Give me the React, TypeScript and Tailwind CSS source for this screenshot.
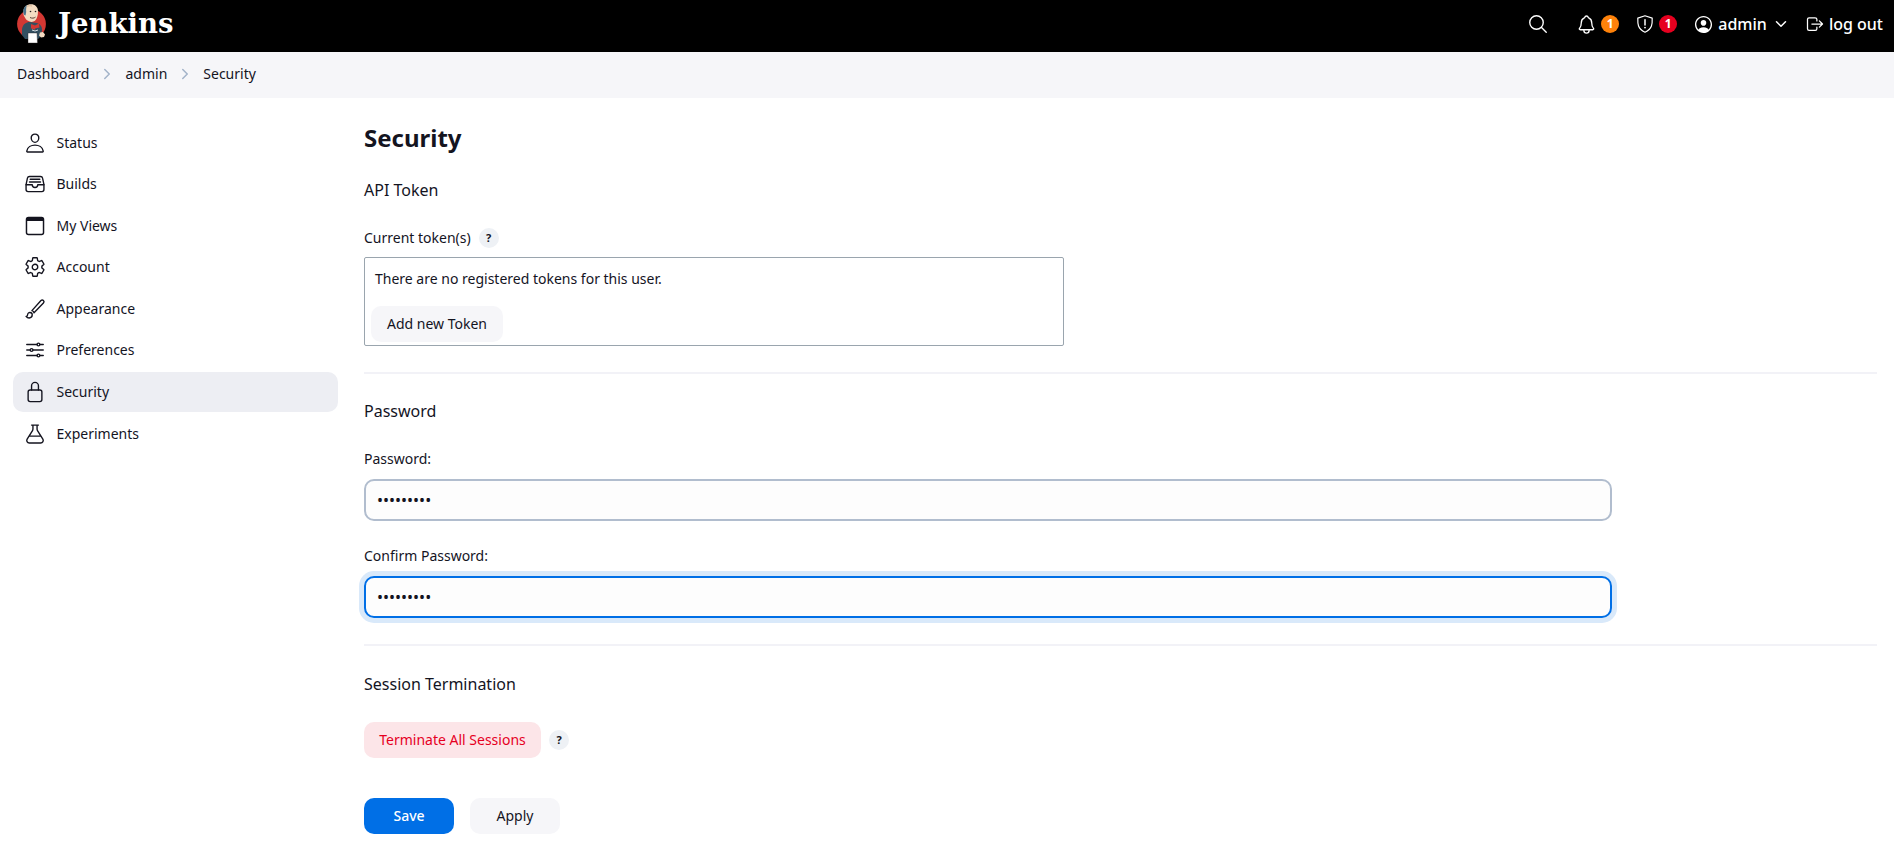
import React from 'react';
import {
  IoSearchOutline,
  IoNotificationsOutline,
  IoPersonCircleOutline,
  IoChevronDownOutline,
  IoChevronForwardOutline,
  IoLogOutOutline,
  IoPersonOutline,
  IoFileTrayFullOutline,
  IoSettingsOutline,
  IoBrushOutline,
  IoOptionsOutline,
  IoLockClosedOutline,
  IoFlaskOutline,
} from 'react-icons/io5';

const WindowIcon = ({ className }: { className?: string }) => (
  <svg viewBox="0 0 24 24" className={className} fill="none">
    <rect x="2.700" y="2.700" width="18.600" height="18.600" rx="2.200" stroke="currentColor" strokeWidth="1.600" />
    <path d="M2.500 5a2.500 2.500 0 0 1 2.500-2.500h14a2.500 2.500 0 0 1 2.500 2.500v1.500h-19z" fill="currentColor" />
  </svg>
);

const ShieldIcon = ({ className }: { className?: string }) => (
  <svg viewBox="0 0 18 18" className={className} fill="none">
    <path
      d="M9 .8l7.200 2.300c.2 5.700.2 10.700-7.200 14.100C1.600 13.800 1.600 8.800 1.800 3.100z"
      stroke="currentColor"
      strokeWidth="1.200"
      strokeLinejoin="round"
    />
    <path d="M9 4.800v5.200" stroke="currentColor" strokeWidth="1.500" strokeLinecap="round" />
    <circle cx="9" cy="12.600" r="0.900" fill="currentColor" />
  </svg>
);

const JenkinsLogo = () => (
  <svg viewBox="0 0 30 40" className="w-[30px] h-[40px] mb-[4px]">
    <circle cx="14.500" cy="20" r="14.400" fill="#d33833" />
    <path d="M5 25c1-5 4-7 8-7l7 1c3 1 5 3 5 7l-1 6-3 3H8l-3-4z" fill="#335061" />
    <path d="M6.500 7c0-4 3.500-6.700 7.500-6.700s7 2.700 7 7c0 4-1 7.500-3 9.500-2 1.500-5 1.500-7 0-2-1-3-3-4-4.800-.6-1-.5-3-.5-5z" fill="#f3dcc2" />
    <path d="M6.500 9c-1-4 1.500-7 3.500-8-1 3-1 5-.8 7l-.7 3.500c-1 0-2-1.500-2-2.500z" fill="#49728b" />
    <circle cx="13.500" cy="7.500" r="0.800" fill="#231f20" />
    <circle cx="18.500" cy="7.500" r="0.800" fill="#231f20" />
    <path d="M9.500 2.500c1.500-.8 4-1 5.500-.5" stroke="#c9a582" strokeWidth="0.700" fill="none" />
    <path d="M13 13.500c2 1 4 .8 5.500-.4" stroke="#49312a" strokeWidth="0.900" fill="none" />
    <path d="M14 20l4 1.500 4-2 .5 4-4 .8-1 1.500-3.500-1.500z" fill="#d33833" />
    <path d="M11 29h9l.5 10h-9.500z" fill="#fff" stroke="#231f20" strokeWidth="0.400" />
    <path d="M23 28.500l3-.5 2 2.500-1 2.500-3 .4-2-2z" fill="#f3dcc2" />
    <path d="M15 26l3 1 3-1" stroke="#fff" strokeWidth="0.800" fill="none" />
  </svg>
);

const navItems = [
  { label: 'Status', icon: IoPersonOutline },
  { label: 'Builds', icon: IoFileTrayFullOutline },
  { label: 'My Views', icon: WindowIcon },
  { label: 'Account', icon: IoSettingsOutline },
  { label: 'Appearance', icon: IoBrushOutline },
  { label: 'Preferences', icon: IoOptionsOutline },
  { label: 'Security', icon: IoLockClosedOutline, active: true },
  { label: 'Experiments', icon: IoFlaskOutline },
];

const HelpBadge = () => (
  <span className="flex items-center justify-center w-5 h-5 rounded-full bg-[#eef1f5] text-[11px] font-bold text-[#14141f]">?</span>
);

const Divider = () => <div className="h-[2px] mt-[26px] bg-[#f2f2f7]" />;

const Badge = ({ color }: { color: string }) => (
  <span className={`flex items-center justify-center w-[18px] h-[18px] rounded-full text-[12px] font-bold text-white ${color}`}>1</span>
);

export default function App() {
  return (
    <div className="h-screen overflow-hidden bg-white text-[#14141f] text-[14px] leading-5 font-['Noto_Sans','Open_Sans',sans-serif]">
      <header className="h-[52px] bg-black text-white flex items-center pl-[17px] pr-[11px]">
        <JenkinsLogo />
        <span className="ml-[11px] mb-[6px] font-['DejaVu_Serif',serif] font-bold text-[27.500px]">Jenkins</span>
        <div className="ml-auto flex items-center pb-[4px] text-[16px] font-medium">
          <IoSearchOutline className="w-[22px] h-[22px]" />
          <IoNotificationsOutline className="w-[21px] h-[21px] ml-[27px]" />
          <span className="ml-[4.500px]"><Badge color="bg-[#fe820a]" /></span>
          <ShieldIcon className="w-[18px] h-[18px] ml-[17px]" />
          <span className="ml-[5px]"><Badge color="bg-[#e6001f]" /></span>
          <IoPersonCircleOutline className="w-[21px] h-[21px] ml-[15.500px]" />
          <span className="ml-[4.500px]">admin</span>
          <IoChevronDownOutline className="w-4 h-4 ml-[6px]" />
          <IoLogOutOutline className="w-5 h-5 ml-[16px]" />
          <span className="ml-[4px]">log out</span>
        </div>
      </header>

      <nav className="h-[46px] pb-[2px] bg-[#f6f6f9] flex items-center pl-[17px]">
        <span>Dashboard</span>
        <IoChevronForwardOutline className="w-4 h-4 mx-[10px] text-[#a3b3c9]" />
        <span>admin</span>
        <IoChevronForwardOutline className="w-4 h-4 mx-[10px] text-[#a3b3c9]" />
        <span>Security</span>
      </nav>

      <div className="flex">
        <aside className="w-[364px] shrink-0 pl-[13px] pr-[26px] pt-[24.500px] flex flex-col gap-[1.600px]">
          {navItems.map((item) => {
            const Icon = item.icon;
            return (
              <div
                key={item.label}
                className={`h-10 flex items-center pl-[11px] rounded-[10px] ${item.active ? 'bg-[#edeef3]' : ''}`}
              >
                <Icon className="w-[22px] h-[22px]" />
                <span className="ml-[10.500px]">{item.label}</span>
              </div>
            );
          })}
        </aside>

        <main className="flex-1 pr-[17px] pt-[24px]">
          <h1 className="h-8 leading-8 text-[24px] font-bold">Security</h1>

          <h2 className="h-6 leading-6 mt-[24px] text-[16px] font-normal">API Token</h2>
          <div className="h-5 mt-[26px] flex items-center gap-2">
            <span>Current token(s)</span>
            <HelpBadge />
          </div>
          <div className="w-[700px] h-[89px] mt-[9px] border border-[#9aa5ae] rounded-[2px] pl-[6px] pt-[11px]">
            <p className="pl-[4px]">There are no registered tokens for this user.</p>
            <button className="mt-[17px] h-9 w-[132px] rounded-[10px] bg-[#f6f6f9]">Add new Token</button>
          </div>

          <Divider />

          <h2 className="h-6 leading-6 mt-[25px] text-[16px] font-normal">Password</h2>
          <label className="block h-5 mt-[26px]">Password:</label>
          <input
            type="password"
            defaultValue="password1"
            className="block w-[1248px] h-[42px] mt-[10px] px-[11px] text-[16px] rounded-[10px] border-2 border-[#b1bdce] bg-[#fdfdfd] outline-none"
          />
          <label className="block h-5 mt-[25px]">Confirm Password:</label>
          <input
            type="password"
            defaultValue="password1"
            className="block w-[1248px] h-[42px] mt-[10px] px-[11px] text-[16px] rounded-[10px] border-2 border-[#006fe6] bg-[#fdfdfd] outline-none shadow-[0_0_0_5px_#d9e9fa]"
          />

          <Divider />

          <h2 className="h-6 leading-6 mt-[26px] text-[16px] font-normal">Session Termination</h2>
          <div className="mt-[26px] flex items-center gap-2">
            <button className="h-9 w-[177px] rounded-[10px] bg-[#fce5e8] text-[#e6001f]">Terminate All Sessions</button>
            <HelpBadge />
          </div>

          <div className="mt-[40px] flex gap-4">
            <button className="h-9 w-[90px] rounded-[10px] bg-[#006fe6] text-white font-medium">Save</button>
            <button className="h-9 w-[90px] rounded-[10px] bg-[#f6f6f9]">Apply</button>
          </div>
        </main>
      </div>
    </div>
  );
}
